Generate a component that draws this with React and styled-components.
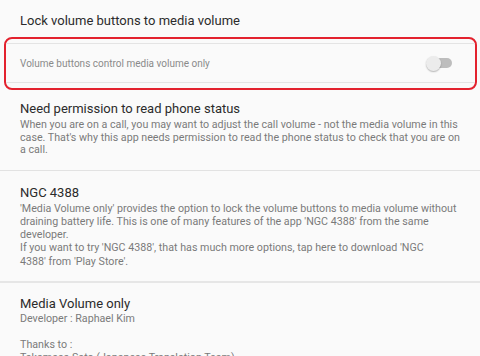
import React from 'react'
import styled, { createGlobalStyle } from 'styled-components'

const Global = createGlobalStyle`
  html, body {
    margin: 0;
    padding: 0;
    background: #fafafa;
  }
  body {
    font-family: Roboto, "Noto Sans", sans-serif;
    -webkit-font-smoothing: antialiased;
  }
`

const Page = styled.div`
  width: 480px;
  height: 356px;
  overflow: hidden;
  background: #fafafa;
`

const CategoryHeader = styled.div`
  height: 37px;
  padding: 12px 20px 0;
  box-sizing: border-box;
  font-size: 13px;
  line-height: 17px;
  color: #2b2b2b;
`

const Highlight = styled.div`
  margin: 0 3px 0 4px;
  height: 53px;
  box-sizing: border-box;
  border: 2px solid #e3222e;
  border-radius: 8px;
  padding: 4px 0;
`

const SwitchRow = styled.div`
  height: 38px;
  border-top: 1px solid #e4e4e4;
  border-bottom: 1px solid #e4e4e4;
  display: flex;
  align-items: center;
  justify-content: space-between;
  padding: 0 23px 0 14px;
`

const RowLabel = styled.span`
  font-size: 10px;
  color: #8a8a8a;
`

const Toggle = styled.div`
  position: relative;
  width: 26px;
  height: 15px;
  display: flex;
  align-items: center;
`

const Track = styled.div`
  width: 20px;
  height: 10px;
  margin-left: 6px;
  border-radius: 5px;
  background: #bdbdbd;
`

const Knob = styled.div`
  position: absolute;
  left: 0;
  top: 0;
  width: 15px;
  height: 15px;
  border-radius: 50%;
  background: #ececec;
  box-shadow: 0 1px 1.5px rgba(0, 0, 0, 0.28);
`

const Item = styled.div`
  padding: ${p => p.$top}px 20px ${p => p.$bottom}px;
  border-bottom: ${p => p.$divider || 'none'};
`

const Title = styled.div`
  font-size: 13px;
  line-height: 17px;
  color: #2b2b2b;
  margin-bottom: ${p => p.$gap}px;
`

const Body = styled.div`
  font-size: 10.7px;
  line-height: ${p => p.$lh}px;
  color: #7a7a7a;
  white-space: pre-line;
`

export default function App() {
  return (
    <Page>
      <Global />
      <CategoryHeader>Lock volume buttons to media volume</CategoryHeader>
      <Highlight>
        <SwitchRow>
          <RowLabel>Volume buttons control media volume only</RowLabel>
          <Toggle>
            <Track />
            <Knob />
          </Toggle>
        </SwitchRow>
      </Highlight>

      <Item $top={10} $bottom={13} $divider="1px solid #e2e2e2">
        <Title $gap={2}>Need permission to read phone status</Title>
        <Body $lh={12.5}>
          {`When you are on a call, you may want to adjust the call volume - not the media volume in this
case. That's why this app needs permission to read the phone status to check that you are on
a call.`}
        </Body>
      </Item>

      <Item $top={13} $bottom={13} $divider="2px solid #e6e6e6">
        <Title $gap={1}>NGC 4388</Title>
        <Body $lh={13.25}>
          {`'Media Volume only' provides the option to lock the volume buttons to media volume without
draining battery life. This is one of many features of the app 'NGC 4388' from the same
developer.
If you want to try 'NGC 4388', that has much more options, tap here to download 'NGC
4388' from 'Play Store'.`}
        </Body>
      </Item>

      <Item $top={12} $bottom={12}>
        <Title $gap={0}>Media Volume only</Title>
        <Body $lh={13}>
          {`Developer : Raphael Kim

Thanks to :
Takamasa Sato (Japanese Translation Team)`}
        </Body>
      </Item>
    </Page>
  )
}
